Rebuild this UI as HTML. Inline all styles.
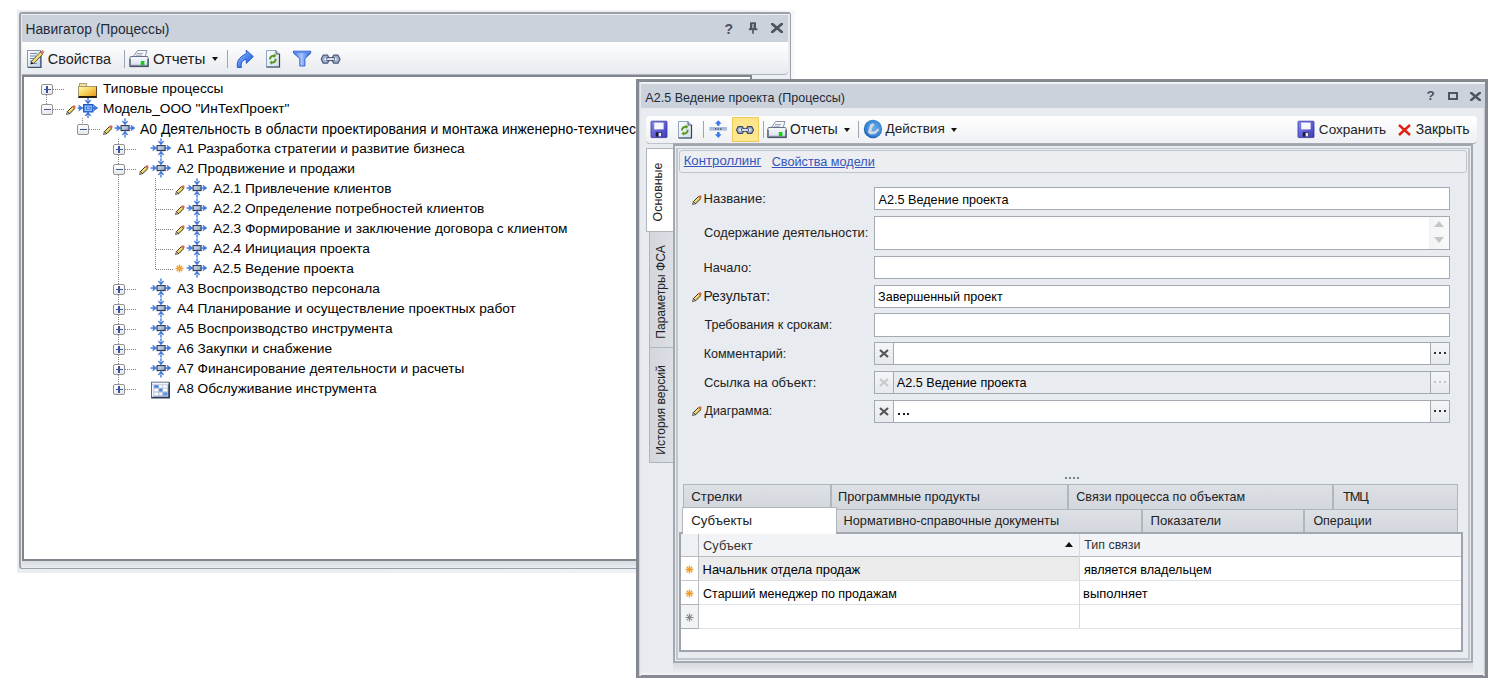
<!DOCTYPE html>
<html><head><meta charset="utf-8">
<style>
*{margin:0;padding:0;box-sizing:border-box}
html,body{width:1509px;height:696px;overflow:hidden;background:#fff;font-family:"Liberation Sans",sans-serif;color:#000}
.a{position:absolute}
.t{position:absolute;white-space:nowrap;font-size:13.6px;line-height:16px}
svg{position:absolute;overflow:visible}
</style></head><body>

<svg width="0" height="0" style="position:absolute">
<defs>
<linearGradient id="gbox" x1="0" y1="0" x2="0" y2="1"><stop offset="0" stop-color="#d8e0ec"/><stop offset="1" stop-color="#7d8ea8"/></linearGradient>
<linearGradient id="gpm" x1="0" y1="0" x2="0" y2="1"><stop offset="0" stop-color="#ffffff"/><stop offset="1" stop-color="#e2e2e2"/></linearGradient>
<linearGradient id="gfold" x1="0" y1="0" x2="1" y2="1"><stop offset="0" stop-color="#fff2b0"/><stop offset="1" stop-color="#e8a830"/></linearGradient>
<symbol id="proc" viewBox="0 0 22 20">
 <defs><linearGradient id="gbox2" x1="0" y1="0" x2="1" y2="1"><stop offset="0" stop-color="#dfe8f6"/><stop offset="0.6" stop-color="#a8b8d4"/><stop offset="1" stop-color="#7888a8"/></linearGradient></defs>
 <g fill="#3a7ae8" stroke="#1f4fb8" stroke-width="0.35">
 <rect x="0.6" y="9.3" width="3" height="1.5" stroke="none"/>
 <path d="M2.6 7 L6.9 10 L2.6 13 L3.8 10Z"/>
 <rect x="15.5" y="9.3" width="2.5" height="1.5" stroke="none"/>
 <path d="M16.8 7 L21 10 L16.8 13 L18 10Z"/>
 <rect x="10.3" y="0.4" width="1.4" height="3" stroke="none"/>
 <path d="M8 3 L11 7 L14 3 L11 4.2Z"/>
 <rect x="10.3" y="16.6" width="1.4" height="3" stroke="none"/>
 <path d="M8 17 L11 13 L14 17 L11 15.8Z"/>
 </g>
 <rect x="7.1" y="7.6" width="8" height="5" fill="url(#gbox2)" stroke="#2a3a58" stroke-width="1.1"/>
</symbol>
<symbol id="model" viewBox="0 0 22 20">
 <g fill="#3a7ae8" stroke="#1f4fb8" stroke-width="0.35">
 <rect x="0.6" y="9.3" width="3" height="1.5" stroke="none"/>
 <path d="M1.6 7 L6.2 10 L1.6 13 L2.8 10Z"/>
 <rect x="16" y="9.3" width="2.5" height="1.5" stroke="none"/>
 <path d="M16.6 7 L21 10 L16.6 13 L17.8 10Z"/>
 <rect x="10.3" y="0" width="1.4" height="2.5" stroke="none"/>
 <path d="M7.8 2 L11 6 L14.2 2 L11 3.2Z"/>
 <rect x="10.3" y="17.5" width="1.4" height="2.5" stroke="none"/>
 <path d="M7.8 18 L11 14 L14.2 18 L11 16.8Z"/>
 </g>
 <rect x="6.5" y="6.5" width="9.5" height="7.5" fill="#3d7ae0" stroke="#2058c0" stroke-width="1"/>
 <rect x="8.3" y="8.2" width="6" height="4.2" fill="none" stroke="#9cc0f4" stroke-width="1.1"/>
 <rect x="10" y="9.6" width="2.6" height="1.6" fill="#a8c8f8"/>
</symbol>
<symbol id="pencil" viewBox="0 0 10 10">
 <path d="M1.4 6.6 L6.4 1.6 L8.6 3.8 L3.6 8.8 Z" fill="#e8cc50" stroke="#2a2418" stroke-width="0.9"/>
 <path d="M2.6 6.8 L6.8 2.6" stroke="#fff0a0" stroke-width="0.9"/>
 <path d="M6.4 1.6 L7.4 0.6 Q8.4 0 9.2 0.8 Q10 1.6 9.4 2.6 L8.6 3.8Z" fill="#d8684a"/>
 <path d="M1.4 6.6 L3.6 8.8 L0.4 9.6Z" fill="#c8c8c8" stroke="#2a2418" stroke-width="0.6"/>
</symbol>
<symbol id="star" viewBox="0 0 9 9">
 <path d="M4.5 0.5V8.5M0.5 4.5H8.5M1.7 1.7L7.3 7.3M7.3 1.7L1.7 7.3" stroke="#f0a030" stroke-width="1.3"/>
</symbol>
<symbol id="star_g" viewBox="0 0 9 9">
 <path d="M4.5 0.5V8.5M0.5 4.5H8.5M1.7 1.7L7.3 7.3M7.3 1.7L1.7 7.3" stroke="#8a8a8a" stroke-width="1.1"/>
</symbol>
<symbol id="save" viewBox="0 0 16 16">
 <rect x="0.5" y="0.5" width="15" height="15" rx="1" fill="#4a4fc8" stroke="#30348a"/>
 <rect x="3" y="1" width="10" height="7" fill="#f0f2fa"/>
 <rect x="4" y="10" width="7" height="5" fill="#20204a"/>
 <rect x="5" y="11" width="2" height="3" fill="#e0e0e0"/>
</symbol>
<symbol id="docref" viewBox="0 0 16 16">
 <path d="M2.5 0.5H10.5L14.5 4.5V15.5H2.5Z" fill="#fafbfd" stroke="#506070"/>
 <path d="M5 7.5A3 3 0 0 1 11 6.5M11 8.5A3 3 0 0 1 5 9.5" stroke="#4a9a30" stroke-width="1.6" fill="none"/>
</symbol>
<symbol id="expand" viewBox="0 0 18 17">
 <rect x="0" y="7.5" width="18" height="2.5" fill="#9ab4d4"/>
 <path d="M9 0L5 5H13Z M9 17L5 12H13Z" fill="#3a7ae0"/>
 <rect x="8" y="4" width="2" height="3" fill="#3a7ae0"/><rect x="8" y="10" width="2" height="3" fill="#3a7ae0"/>
</symbol>
<symbol id="chain" viewBox="0 0 18 10">
 <rect x="1" y="1.5" width="9" height="7" rx="3.5" fill="none" stroke="#4a5a70" stroke-width="2"/>
 <rect x="8" y="1.5" width="9" height="7" rx="3.5" fill="none" stroke="#4a5a70" stroke-width="2"/>
 <rect x="2.5" y="3.5" width="13" height="3" rx="1.5" fill="#c0c8d8"/>
</symbol>
<symbol id="printer" viewBox="0 0 18 17">
 <path d="M5 0.5H15L14 6H4Z" fill="#f2f4f8" stroke="#6a7486"/>
 <path d="M1.5 6H16.5L17.5 10V15.5H0.5V10Z" fill="#d4d9e2" stroke="#4e586a"/>
 <rect x="2" y="10" width="14" height="2" fill="#9aa4b4"/>
 <rect x="12" y="11.5" width="3" height="2.5" fill="#28c028"/>
</symbol>
<symbol id="globe" viewBox="0 0 18 18">
 <circle cx="9" cy="9" r="8.5" fill="#2a6ab8"/>
 <circle cx="8" cy="7.5" r="6" fill="#5a9ae0"/>
 <path d="M4 9C5 12 8 13 10 11L14 5L12 4L9 9L6 7Z" fill="#e8f0fa"/>
</symbol>
<symbol id="redx" viewBox="0 0 13 12">
 <path d="M1 1L12 11M12 1L1 11" stroke="#e02010" stroke-width="2.4"/>
</symbol>
<symbol id="props" viewBox="0 0 17 17">
 <rect x="0.5" y="2.5" width="12" height="14" fill="#eef2f8" stroke="#5a6a80"/>
 <path d="M2.5 6H9M2.5 8.5H9M2.5 11H7M2.5 13.5H10" stroke="#8a9ab0" stroke-width="0.8"/>
 <path d="M4 12L13 3L15 5L6 14L3.5 14.5Z" fill="#f2d050" stroke="#6a5a20" stroke-width="0.7"/>
 <path d="M13 3L14.5 1.5L16.5 3.5L15 5Z" fill="#e06a50"/>
</symbol>
<symbol id="redo" viewBox="0 0 17 18">
 <path d="M2 17C0 12 2 7 8 6V2L16 8L8 14V10C5 10 3 12 2 17Z" fill="#3a78e0" stroke="#2050b0" stroke-width="0.8"/>
</symbol>
<symbol id="filter" viewBox="0 0 18 16">
 <path d="M0.5 0.5H17.5L11 7V15.5L7 13V7Z" fill="#3a82e8" stroke="#2a60c0" stroke-width="0.8"/>
 <path d="M2 1.5H16L12 5H6Z" fill="#8ab8f4"/>
</symbol>
<symbol id="pin" viewBox="0 0 10 12">
 <rect x="2" y="0.3" width="6" height="7" fill="#50555c"/>
 <rect x="4.4" y="2" width="1.2" height="4.6" fill="#cdd3db"/>
 <rect x="0.8" y="6.4" width="8.6" height="1.8" fill="#50555c"/>
 <rect x="4.2" y="8" width="1.6" height="3.8" fill="#50555c"/>
</symbol>
<symbol id="xbold" viewBox="0 0 12 10">
 <path d="M1.2 1L10.8 9M10.8 1L1.2 9" stroke="#50555c" stroke-width="2.8" stroke-linecap="square"/>
</symbol>
</defs></svg>
<div class="a" style="left:17px;top:10px;width:778px;height:563px;background:linear-gradient(90deg,#e9edf2,#eef1f5 95%,#f6f8fa)"></div>
<div class="a" style="left:19px;top:12px;width:772px;height:557px;border:2px solid #9ba0a7;border-right-width:1px;border-bottom-width:1px;border-radius:3px;background:#e8ebf0"></div>
<div class="a" style="left:21px;top:14px;width:769px;height:1px;background:#eceff3"></div>
<div class="a" style="left:22px;top:15px;width:766px;height:27px;background:#cbd2db"></div>
<div class="a" style="left:788px;top:15px;width:2px;height:27px;background:#e4e7ec"></div>
<div class="t" style="left:25.42445px;top:21.21px;font-size:13.83px;color:#1e2a3a;">Навигатор (Процессы)</div>
<div class="a" style="left:22px;top:42px;width:766px;height:33px;background:linear-gradient(#ffffff,#e7eaef);border-bottom:1px solid #b0b4ba;border-radius:0 0 4px 0"></div>
<svg style="left:25px;top:47px" width="22" height="22" viewBox="0 0 22 22">
<defs><linearGradient id="ipg" x1="0" y1="0" x2="1" y2="1"><stop offset="0" stop-color="#ffffff"/><stop offset="1" stop-color="#c4d0e2"/></linearGradient></defs>
<rect x="2.5" y="3.5" width="13" height="16.5" fill="url(#ipg)" stroke="#8498b8"/>
<path d="M3 20.5H16V4" stroke="#3c5070" stroke-width="1.2" fill="none"/>
<path d="M5 6.5H12M5 9H11M5 11.5H9M5 14H9M5 16.5H12" stroke="#7890b0" stroke-width="1"/>
<path d="M6.2 14.6L15.2 5.2L17.6 7.4L8.4 16.6Z" fill="#f0dc78" stroke="#2a2a20" stroke-width="0.7"/>
<path d="M15.2 5.2L16.6 3.6Q17.6 2.8 18.6 3.8Q19.4 4.8 18.8 5.8L17.6 7.4Z" fill="#e07a5a"/>
<path d="M6.2 14.6L8.4 16.6L5.6 17.4Z" fill="#222"/>
</svg>
<div class="t" style="left:47.82348px;top:50.82px;font-size:14.38px;color:#222;">Свойства</div>
<div class="a" style="left:124px;top:50px;width:1px;height:18px;background:#9aa6b4"></div>
<svg style="left:128px;top:47px" width="22" height="22" viewBox="0 0 22 22">
<defs><linearGradient id="iprb" x1="0" y1="0" x2="0" y2="1"><stop offset="0" stop-color="#f6f8fc"/><stop offset="0.7" stop-color="#dfe6f2"/><stop offset="1" stop-color="#9aa6ba"/></linearGradient></defs>
<path d="M9.5 3.5H19L17.2 9.5H5.5Z" fill="#f4f6fa" stroke="#7a88a0" stroke-width="0.9"/>
<path d="M9 6.5H15M8 8.2H14" stroke="#8a96aa" stroke-width="0.8"/>
<path d="M2.5 9.5H19.5L20.5 12V19.5H1.5V12Z" fill="url(#iprb)" stroke="#5a6680" stroke-width="0.9"/>
<rect x="2" y="18.5" width="18.5" height="1.6" fill="#4a5468"/>
<rect x="1.6" y="12" width="1.4" height="7" fill="#7a8498"/><rect x="19.2" y="12" width="1.4" height="7" fill="#5a6478"/>
<rect x="12.8" y="14" width="3.6" height="4" fill="#10d010"/>
</svg>
<div class="t" style="left:152.90126px;top:50.54px;font-size:15.19px;color:#222;">Отчеты</div>
<div class="a" style="left:212px;top:57px;width:0;height:0;border-left:3.5px solid transparent;border-right:3.5px solid transparent;border-top:4px solid #111"></div>
<div class="a" style="left:227px;top:50px;width:1px;height:18px;background:#9aa6b4"></div>
<svg style="left:234px;top:47px" width="22" height="22" viewBox="0 0 22 22">
<defs><linearGradient id="irg" x1="0" y1="0" x2="1" y2="1"><stop offset="0" stop-color="#b8d4fa"/><stop offset="0.5" stop-color="#4a86ee"/><stop offset="1" stop-color="#1a4ed0"/></linearGradient></defs>
<path d="M3.4 20.6C2.8 16 3.2 11 12.3 6.6V3.2L19.3 9.6L12.3 16.4V12.4C8.4 13 6.6 15.6 7.4 20.4Z" fill="url(#irg)" stroke="#1f4fc8" stroke-width="0.9" stroke-linejoin="round"/>
</svg>
<svg style="left:262px;top:47px" width="22" height="22" viewBox="0 0 22 22">
<defs><linearGradient id="idg" x1="0" y1="0" x2="1" y2="1"><stop offset="0" stop-color="#ffffff"/><stop offset="1" stop-color="#d0dcec"/></linearGradient></defs>
<path d="M4.5 3.5H14L17.5 7V20H4.5Z" fill="url(#idg)" stroke="#90a4c4" stroke-width="1"/>
<path d="M17.5 7V20H4.5" stroke="#34465e" stroke-width="1.2" fill="none"/>
<path d="M14 3.5V7H17.5" fill="#b8c4d8" stroke="#34465e" stroke-width="0.8"/>
<path d="M8 12.5Q8 8.6 12.6 8.8" stroke="#5a9a20" stroke-width="2" fill="none"/>
<path d="M11.8 6.6L14.4 8.8L11.8 11Z" fill="#5a9a20"/>
<path d="M13.6 11.8Q13.8 15.6 9.2 15.6" stroke="#5a9a20" stroke-width="2" fill="none"/>
<path d="M10 13.4L7.4 15.6L10 17.8Z" fill="#5a9a20"/>
</svg>
<svg style="left:290px;top:47px" width="22" height="22" viewBox="0 0 22 22">
<defs><linearGradient id="ifg" x1="0" y1="0" x2="1" y2="0"><stop offset="0" stop-color="#3a70e8"/><stop offset="0.45" stop-color="#a8c8fa"/><stop offset="1" stop-color="#2a5ed8"/></linearGradient></defs>
<path d="M3.4 4.2H20.8L20.6 6.2L14.9 11.7V19H9.8V11.7L3.6 6.2Z" fill="url(#ifg)" stroke="#2a58d0" stroke-width="0.9" stroke-linejoin="round"/>
<path d="M4 4.6H20.2V6H4Z" fill="#5a8cf0"/>
</svg>
<svg style="left:318px;top:47px" width="26" height="22" viewBox="0 0 26 22">
<path d="M3.2 12.2L5.2 8.2H9.6L11.4 12.2L9.6 16.2H5.2Z" fill="#9fb0cc" stroke="#4a5a80" stroke-width="1.2" stroke-linejoin="round"/>
<path d="M13.8 12.2L15.6 8.2H20L22 12.2L20 16.2H15.6Z" fill="#9fb0cc" stroke="#4a5a80" stroke-width="1.2" stroke-linejoin="round"/>
<rect x="8.6" y="10.6" width="8" height="3" rx="1.2" fill="#dfe6f2" stroke="#1e2e50" stroke-width="0.8"/>
<circle cx="7.4" cy="12.3" r="1" fill="#fff"/><circle cx="17.6" cy="12.3" r="1" fill="#fff"/>
</svg>
<div class="t" style="left:724.5px;top:21.15px;font-size:14px;color:#4a5262;font-weight:bold">?</div>
<svg style="left:748px;top:22px" width="10" height="12"><use href="#pin" width="10" height="12"/></svg>
<svg style="left:771px;top:23px" width="12" height="10"><use href="#xbold" width="12" height="10"/></svg>
<div class="a" style="left:22px;top:561px;width:768px;height:7px;background:linear-gradient(#d8dbe0,#e8ebf0)"></div>
<div class="a" style="left:22px;top:75px;width:730px;height:486px;background:#fff;border:2px solid #80868e"></div>
<div class="a" style="left:752px;top:75px;width:38px;height:4px;background:#eceff3"></div>
<div class="a" style="left:46px;top:95px;width:1px;height:9px;background:repeating-linear-gradient(180deg,#808080 0 1px,transparent 1px 2px)"></div>
<div class="a" style="left:82px;top:118px;width:1px;height:6px;background:repeating-linear-gradient(180deg,#808080 0 1px,transparent 1px 2px)"></div>
<div class="a" style="left:118px;top:139px;width:1px;height:245px;background:repeating-linear-gradient(180deg,#808080 0 1px,transparent 1px 2px)"></div>
<div class="a" style="left:155px;top:178px;width:1px;height:92px;background:repeating-linear-gradient(180deg,#808080 0 1px,transparent 1px 2px)"></div>
<div class="a" style="left:41px;top:84px;width:11.5px;height:11px;border:1.3px solid #929292;border-radius:2px;background:linear-gradient(#fff,#e8e8e8)"></div><div class="a" style="left:44px;top:89px;width:6.5px;height:1.3px;background:#3a52a0"></div><div class="a" style="left:46px;top:86.3px;width:1.5px;height:6.8px;background:#3a52a0"></div>
<div class="a" style="left:53px;top:89px;width:12px;height:1px;background:repeating-linear-gradient(90deg,#808080 0 1px,transparent 1px 2px)"></div>
<div class="a" style="left:79px;top:82.5px;width:8px;height:3.5px;background:linear-gradient(#e8dca8,#f8ec98);border:1px solid #b0a070;border-bottom:none;border-radius:1px 1px 0 0"></div>
<div class="a" style="left:78px;top:85.5px;width:19px;height:12px;background:linear-gradient(150deg,#fff6a8,#f6cc50 55%,#e89820);border:1px solid #a89870;border-right-color:#5a4a28;border-bottom:2px solid #2a2010"></div>
<div class="t" style="left:103px;top:81.45px;font-size:13.7px;color:#000;">Типовые процессы</div>
<div class="a" style="left:41px;top:104px;width:11.5px;height:11px;border:1.3px solid #929292;border-radius:2px;background:linear-gradient(#fff,#e8e8e8)"></div><div class="a" style="left:44px;top:109px;width:6.5px;height:1.3px;background:#3a52a0"></div>
<div class="a" style="left:53px;top:109px;width:12px;height:1px;background:repeating-linear-gradient(90deg,#808080 0 1px,transparent 1px 2px)"></div>
<svg style="left:65.5px;top:104.5px" width="10" height="10"><use href="#pencil" width="10" height="10"/></svg>
<svg style="left:77.4px;top:98px" width="22" height="20"><use href="#model" width="22" height="20"/></svg>
<div class="t" style="left:103px;top:101.45px;font-size:13.7px;color:#000;">Модель_ООО "ИнТехПроект"</div>
<div class="a" style="left:77px;top:124px;width:11.5px;height:11px;border:1.3px solid #929292;border-radius:2px;background:linear-gradient(#fff,#e8e8e8)"></div><div class="a" style="left:80px;top:129px;width:6.5px;height:1.3px;background:#3a52a0"></div>
<div class="a" style="left:89px;top:129px;width:12px;height:1px;background:repeating-linear-gradient(90deg,#808080 0 1px,transparent 1px 2px)"></div>
<svg style="left:102.5px;top:124.5px" width="10" height="10"><use href="#pencil" width="10" height="10"/></svg>
<svg style="left:114.4px;top:118px" width="22" height="20"><use href="#proc" width="22" height="20"/></svg>
<div class="t" style="left:140px;top:121.37px;font-size:13.95px;color:#000;">A0 Деятельность в области проектирования и монтажа инженерно-технических систем</div>
<div class="a" style="left:113px;top:144px;width:11.5px;height:11px;border:1.3px solid #929292;border-radius:2px;background:linear-gradient(#fff,#e8e8e8)"></div><div class="a" style="left:116px;top:149px;width:6.5px;height:1.3px;background:#3a52a0"></div><div class="a" style="left:118px;top:146.3px;width:1.5px;height:6.8px;background:#3a52a0"></div>
<div class="a" style="left:125px;top:149px;width:12px;height:1px;background:repeating-linear-gradient(90deg,#808080 0 1px,transparent 1px 2px)"></div>
<svg style="left:150.4px;top:138px" width="22" height="20"><use href="#proc" width="22" height="20"/></svg>
<div class="t" style="left:177px;top:141.45px;font-size:13.7px;color:#000;">A1 Разработка стратегии и развитие бизнеса</div>
<div class="a" style="left:113px;top:164px;width:11.5px;height:11px;border:1.3px solid #929292;border-radius:2px;background:linear-gradient(#fff,#e8e8e8)"></div><div class="a" style="left:116px;top:169px;width:6.5px;height:1.3px;background:#3a52a0"></div>
<div class="a" style="left:125px;top:169px;width:12px;height:1px;background:repeating-linear-gradient(90deg,#808080 0 1px,transparent 1px 2px)"></div>
<svg style="left:138.5px;top:164.5px" width="10" height="10"><use href="#pencil" width="10" height="10"/></svg>
<svg style="left:150.4px;top:158px" width="22" height="20"><use href="#proc" width="22" height="20"/></svg>
<div class="t" style="left:177px;top:161.45px;font-size:13.7px;color:#000;">A2 Продвижение и продажи</div>
<div class="a" style="left:156px;top:189px;width:18px;height:1px;background:repeating-linear-gradient(90deg,#808080 0 1px,transparent 1px 2px)"></div>
<svg style="left:174.5px;top:184.5px" width="10" height="10"><use href="#pencil" width="10" height="10"/></svg>
<svg style="left:186.4px;top:178px" width="22" height="20"><use href="#proc" width="22" height="20"/></svg>
<div class="t" style="left:213px;top:181.45px;font-size:13.7px;color:#000;">A2.1 Привлечение клиентов</div>
<div class="a" style="left:156px;top:209px;width:18px;height:1px;background:repeating-linear-gradient(90deg,#808080 0 1px,transparent 1px 2px)"></div>
<svg style="left:174.5px;top:204.5px" width="10" height="10"><use href="#pencil" width="10" height="10"/></svg>
<svg style="left:186.4px;top:198px" width="22" height="20"><use href="#proc" width="22" height="20"/></svg>
<div class="t" style="left:213px;top:201.45px;font-size:13.7px;color:#000;">A2.2 Определение потребностей клиентов</div>
<div class="a" style="left:156px;top:229px;width:18px;height:1px;background:repeating-linear-gradient(90deg,#808080 0 1px,transparent 1px 2px)"></div>
<svg style="left:174.5px;top:224.5px" width="10" height="10"><use href="#pencil" width="10" height="10"/></svg>
<svg style="left:186.4px;top:218px" width="22" height="20"><use href="#proc" width="22" height="20"/></svg>
<div class="t" style="left:213px;top:221.45px;font-size:13.7px;color:#000;">A2.3 Формирование и заключение договора с клиентом</div>
<div class="a" style="left:156px;top:249px;width:18px;height:1px;background:repeating-linear-gradient(90deg,#808080 0 1px,transparent 1px 2px)"></div>
<svg style="left:174.5px;top:244.5px" width="10" height="10"><use href="#pencil" width="10" height="10"/></svg>
<svg style="left:186.4px;top:238px" width="22" height="20"><use href="#proc" width="22" height="20"/></svg>
<div class="t" style="left:213px;top:241.45px;font-size:13.7px;color:#000;">A2.4 Инициация проекта</div>
<div class="a" style="left:156px;top:269px;width:18px;height:1px;background:repeating-linear-gradient(90deg,#808080 0 1px,transparent 1px 2px)"></div>
<svg style="left:175px;top:263.5px" width="9" height="9"><use href="#star" width="9" height="9"/></svg>
<svg style="left:186.4px;top:258px" width="22" height="20"><use href="#proc" width="22" height="20"/></svg>
<div class="t" style="left:213px;top:261.45px;font-size:13.7px;color:#000;">A2.5 Ведение проекта</div>
<div class="a" style="left:113px;top:284px;width:11.5px;height:11px;border:1.3px solid #929292;border-radius:2px;background:linear-gradient(#fff,#e8e8e8)"></div><div class="a" style="left:116px;top:289px;width:6.5px;height:1.3px;background:#3a52a0"></div><div class="a" style="left:118px;top:286.3px;width:1.5px;height:6.8px;background:#3a52a0"></div>
<div class="a" style="left:125px;top:289px;width:12px;height:1px;background:repeating-linear-gradient(90deg,#808080 0 1px,transparent 1px 2px)"></div>
<svg style="left:150.4px;top:278px" width="22" height="20"><use href="#proc" width="22" height="20"/></svg>
<div class="t" style="left:177px;top:281.45px;font-size:13.7px;color:#000;">A3 Воспроизводство персонала</div>
<div class="a" style="left:113px;top:304px;width:11.5px;height:11px;border:1.3px solid #929292;border-radius:2px;background:linear-gradient(#fff,#e8e8e8)"></div><div class="a" style="left:116px;top:309px;width:6.5px;height:1.3px;background:#3a52a0"></div><div class="a" style="left:118px;top:306.3px;width:1.5px;height:6.8px;background:#3a52a0"></div>
<div class="a" style="left:125px;top:309px;width:12px;height:1px;background:repeating-linear-gradient(90deg,#808080 0 1px,transparent 1px 2px)"></div>
<svg style="left:150.4px;top:298px" width="22" height="20"><use href="#proc" width="22" height="20"/></svg>
<div class="t" style="left:177px;top:301.45px;font-size:13.7px;color:#000;">A4 Планирование и осуществление проектных работ</div>
<div class="a" style="left:113px;top:324px;width:11.5px;height:11px;border:1.3px solid #929292;border-radius:2px;background:linear-gradient(#fff,#e8e8e8)"></div><div class="a" style="left:116px;top:329px;width:6.5px;height:1.3px;background:#3a52a0"></div><div class="a" style="left:118px;top:326.3px;width:1.5px;height:6.8px;background:#3a52a0"></div>
<div class="a" style="left:125px;top:329px;width:12px;height:1px;background:repeating-linear-gradient(90deg,#808080 0 1px,transparent 1px 2px)"></div>
<svg style="left:150.4px;top:318px" width="22" height="20"><use href="#proc" width="22" height="20"/></svg>
<div class="t" style="left:177px;top:321.45px;font-size:13.7px;color:#000;">A5 Воспроизводство инструмента</div>
<div class="a" style="left:113px;top:344px;width:11.5px;height:11px;border:1.3px solid #929292;border-radius:2px;background:linear-gradient(#fff,#e8e8e8)"></div><div class="a" style="left:116px;top:349px;width:6.5px;height:1.3px;background:#3a52a0"></div><div class="a" style="left:118px;top:346.3px;width:1.5px;height:6.8px;background:#3a52a0"></div>
<div class="a" style="left:125px;top:349px;width:12px;height:1px;background:repeating-linear-gradient(90deg,#808080 0 1px,transparent 1px 2px)"></div>
<svg style="left:150.4px;top:338px" width="22" height="20"><use href="#proc" width="22" height="20"/></svg>
<div class="t" style="left:177px;top:341.45px;font-size:13.7px;color:#000;">A6 Закупки и снабжение</div>
<div class="a" style="left:113px;top:364px;width:11.5px;height:11px;border:1.3px solid #929292;border-radius:2px;background:linear-gradient(#fff,#e8e8e8)"></div><div class="a" style="left:116px;top:369px;width:6.5px;height:1.3px;background:#3a52a0"></div><div class="a" style="left:118px;top:366.3px;width:1.5px;height:6.8px;background:#3a52a0"></div>
<div class="a" style="left:125px;top:369px;width:12px;height:1px;background:repeating-linear-gradient(90deg,#808080 0 1px,transparent 1px 2px)"></div>
<svg style="left:150.4px;top:358px" width="22" height="20"><use href="#proc" width="22" height="20"/></svg>
<div class="t" style="left:177px;top:361.45px;font-size:13.7px;color:#000;">A7 Финансирование деятельности и расчеты</div>
<div class="a" style="left:113px;top:384px;width:11.5px;height:11px;border:1.3px solid #929292;border-radius:2px;background:linear-gradient(#fff,#e8e8e8)"></div><div class="a" style="left:116px;top:389px;width:6.5px;height:1.3px;background:#3a52a0"></div><div class="a" style="left:118px;top:386.3px;width:1.5px;height:6.8px;background:#3a52a0"></div>
<div class="a" style="left:125px;top:389px;width:12px;height:1px;background:repeating-linear-gradient(90deg,#808080 0 1px,transparent 1px 2px)"></div>
<svg style="left:148px;top:379px" width="24" height="21" viewBox="0 0 24 21">
<rect x="3.5" y="3.2" width="17.6" height="15" fill="#b4c0d4" stroke="#5a6a88" stroke-width="1"/>
<path d="M21.2 3.5V18.8H3.2" stroke="#2e3e58" stroke-width="1.6" fill="none"/>
<rect x="4" y="3.8" width="16.6" height="1.6" fill="#f4f6fa"/>
<rect x="4" y="6" width="1.4" height="11.6" fill="#f4f6fa"/>
<rect x="6.3" y="6.2" width="4" height="2.6" fill="#4a86ec"/><rect x="11.2" y="6.2" width="3" height="2.6" fill="#fbfcfe"/><rect x="15.1" y="6.2" width="4.2" height="2.6" fill="#fbfcfe"/>
<rect x="6.3" y="9.7" width="4" height="2.7" fill="#fbfcfe"/><rect x="11.2" y="9.7" width="3" height="2.7" fill="#4a86ec"/><rect x="15.1" y="9.7" width="4.2" height="2.7" fill="#fbfcfe"/>
<rect x="6.3" y="13.6" width="4" height="2.7" fill="#fbfcfe"/><rect x="11.2" y="13.6" width="3" height="2.7" fill="#eef2fa"/><rect x="15.1" y="13.6" width="4.2" height="2.7" fill="#5a92f0"/>
</svg>
<div class="t" style="left:177px;top:381.45px;font-size:13.7px;color:#000;">A8 Обслуживание инструмента</div>
<div class="a" style="left:636px;top:79px;width:852px;height:599px;border:3px solid #858a92;background:#e8ebf0"></div>
<div class="a" style="left:639px;top:82px;width:846px;height:2px;background:#f0f3f6"></div>
<div class="a" style="left:639px;top:82px;width:2px;height:594px;background:linear-gradient(90deg,#c4c8ce,#f0f3f6)"></div>
<div class="a" style="left:1483px;top:84px;width:2px;height:592px;background:linear-gradient(90deg,#f0f3f6,#b8bcc2)"></div>
<div class="a" style="left:641px;top:84px;width:844px;height:24px;background:#cbd2db"></div>
<div class="t" style="left:645.3px;top:90.04px;font-size:12.57px;color:#1e2a3a;">A2.5 Ведение проекта (Процессы)</div>
<div class="t" style="left:1426.5px;top:88.32px;font-size:13.5px;color:#4a5262;font-weight:bold">?</div>
<div class="a" style="left:1448px;top:92px;width:10px;height:8px;border:2px solid #50555c"></div>
<svg style="left:1469.5px;top:91.5px" width="11" height="9"><use href="#xbold" width="11" height="9"/></svg>
<div class="a" style="left:646px;top:116px;width:831px;height:28px;background:linear-gradient(#ffffff,#eef0f3);border-radius:4px;border-bottom:1px solid #a9adb3"></div>
<div class="a" style="left:732px;top:117px;width:27px;height:25px;background:linear-gradient(#fde488,#fde992);border:1px solid #efc95a"></div>
<svg style="left:646px;top:118px" width="22" height="22" viewBox="0 0 22 22">
<defs><linearGradient id="isg" x1="0" y1="0" x2="1" y2="1"><stop offset="0" stop-color="#8a8af0"/><stop offset="1" stop-color="#3a3ab8"/></linearGradient></defs>
<rect x="5" y="3.2" width="16" height="16.4" rx="0.8" fill="url(#isg)" stroke="#3434a0" stroke-width="0.8"/>
<rect x="8.2" y="4.6" width="9.4" height="6.8" fill="#f8f8fc"/>
<rect x="9.8" y="14.2" width="6" height="4.4" fill="#1a1a40"/>
<rect x="12.6" y="14.8" width="2.6" height="3.6" fill="#e8e8f0"/>
</svg>
<svg style="left:674px;top:118px" width="22" height="22" viewBox="0 0 22 22">
<defs><linearGradient id="idg" x1="0" y1="0" x2="1" y2="1"><stop offset="0" stop-color="#ffffff"/><stop offset="1" stop-color="#d0dcec"/></linearGradient></defs>
<path d="M4.5 3.5H14L17.5 7V20H4.5Z" fill="url(#idg)" stroke="#90a4c4" stroke-width="1"/>
<path d="M17.5 7V20H4.5" stroke="#34465e" stroke-width="1.2" fill="none"/>
<path d="M14 3.5V7H17.5" fill="#b8c4d8" stroke="#34465e" stroke-width="0.8"/>
<path d="M8 12.5Q8 8.6 12.6 8.8" stroke="#5a9a20" stroke-width="2" fill="none"/>
<path d="M11.8 6.6L14.4 8.8L11.8 11Z" fill="#5a9a20"/>
<path d="M13.6 11.8Q13.8 15.6 9.2 15.6" stroke="#5a9a20" stroke-width="2" fill="none"/>
<path d="M10 13.4L7.4 15.6L10 17.8Z" fill="#5a9a20"/>
</svg>
<div class="a" style="left:703px;top:121px;width:1px;height:17px;background:#9aa6b4"></div>
<svg style="left:706px;top:118px" width="22" height="22" viewBox="0 0 22 22">
<path d="M12.3 2.2L8.9 5.8H11V7.8H13.6V5.8H15.6Z" fill="#3a78f0"/>
<path d="M12.3 20L8.9 16.2H11V13.9H13.6V16.2H15.6Z" fill="#3a78f0"/>
<rect x="3.5" y="9" width="17.4" height="3.6" fill="#a8bcd8"/>
<rect x="9" y="10.3" width="1.2" height="1.4" fill="#2a3a60"/><rect x="11.6" y="10.3" width="1.2" height="1.4" fill="#2a3a60"/><rect x="14.2" y="10.3" width="1.2" height="1.4" fill="#2a3a60"/>
</svg>
<svg style="left:732.5px;top:118px" width="22" height="22" viewBox="0 0 22 22">
<path d="M3.5 12L5.3 8.6H9.4L11 12L9.4 15.4H5.3Z" fill="#a8b6ce" stroke="#3c4a6a" stroke-width="1.2" stroke-linejoin="round"/>
<path d="M13 12L14.6 8.6H18.7L20.5 12L18.7 15.4H14.6Z" fill="#a8b6ce" stroke="#3c4a6a" stroke-width="1.2" stroke-linejoin="round"/>
<rect x="8.4" y="10.6" width="7.2" height="2.8" rx="1.2" fill="#e4eaf4" stroke="#1e2e50" stroke-width="0.8"/>
<circle cx="7.2" cy="12" r="0.9" fill="#fff"/><circle cx="16.8" cy="12" r="0.9" fill="#fff"/>
</svg>
<div class="a" style="left:763px;top:121px;width:1px;height:17px;background:#9aa6b4"></div>
<svg style="left:766px;top:118px" width="22" height="22" viewBox="0 0 22 22">
<defs><linearGradient id="iprb" x1="0" y1="0" x2="0" y2="1"><stop offset="0" stop-color="#f6f8fc"/><stop offset="0.7" stop-color="#dfe6f2"/><stop offset="1" stop-color="#9aa6ba"/></linearGradient></defs>
<path d="M9.5 3.5H19L17.2 9.5H5.5Z" fill="#f4f6fa" stroke="#7a88a0" stroke-width="0.9"/>
<path d="M9 6.5H15M8 8.2H14" stroke="#8a96aa" stroke-width="0.8"/>
<path d="M2.5 9.5H19.5L20.5 12V19.5H1.5V12Z" fill="url(#iprb)" stroke="#5a6680" stroke-width="0.9"/>
<rect x="2" y="18.5" width="18.5" height="1.6" fill="#4a5468"/>
<rect x="1.6" y="12" width="1.4" height="7" fill="#7a8498"/><rect x="19.2" y="12" width="1.4" height="7" fill="#5a6478"/>
<rect x="12.8" y="14" width="3.6" height="4" fill="#10d010"/>
</svg>
<div class="t" style="left:790.0661200000001px;top:122.23px;font-size:13.78px;color:#222;">Отчеты</div>
<div class="a" style="left:844px;top:128px;width:0;height:0;border-left:3.5px solid transparent;border-right:3.5px solid transparent;border-top:4px solid #111"></div>
<div class="a" style="left:858px;top:121px;width:1px;height:17px;background:#9aa6b4"></div>
<svg style="left:862px;top:118px" width="22" height="22" viewBox="0 0 22 22">
<defs><radialGradient id="igg" cx="0.55" cy="0.45" r="0.6"><stop offset="0" stop-color="#6ab0f0"/><stop offset="0.7" stop-color="#3a88d8"/><stop offset="1" stop-color="#1050a0"/></radialGradient></defs>
<circle cx="11" cy="11" r="9.2" fill="url(#igg)"/>
<path d="M11 5.4L8.4 6.4L6.8 11.6L6 14.4L8.6 16.2L13.4 15.8L17 12.2L16.2 10.4L12.4 13.4L9.4 13.2L10 10L12.4 6.4Z" fill="#d6dce6" stroke="#b8c4d4" stroke-width="0.5"/>
</svg>
<div class="t" style="left:885.49176px;top:121.31px;font-size:13.53px;color:#222;">Действия</div>
<div class="a" style="left:951px;top:128px;width:0;height:0;border-left:3.5px solid transparent;border-right:3.5px solid transparent;border-top:4px solid #111"></div>
<svg style="left:1293px;top:118px" width="22" height="22" viewBox="0 0 22 22">
<defs><linearGradient id="isg" x1="0" y1="0" x2="1" y2="1"><stop offset="0" stop-color="#8a8af0"/><stop offset="1" stop-color="#3a3ab8"/></linearGradient></defs>
<rect x="5" y="3.2" width="16" height="16.4" rx="0.8" fill="url(#isg)" stroke="#3434a0" stroke-width="0.8"/>
<rect x="8.2" y="4.6" width="9.4" height="6.8" fill="#f8f8fc"/>
<rect x="9.8" y="14.2" width="6" height="4.4" fill="#1a1a40"/>
<rect x="12.6" y="14.8" width="2.6" height="3.6" fill="#e8e8f0"/>
</svg>
<div class="t" style="left:1318.8682999999999px;top:121.90px;font-size:13.55px;color:#222;">Сохранить</div>
<svg style="left:1398px;top:124px" width="13" height="12"><use href="#redx" width="13" height="12"/></svg>
<div class="t" style="left:1415.76876px;top:121.16px;font-size:13.98px;color:#222;">Закрыть</div>
<div class="a" style="left:649px;top:231px;width:25px;height:117px;background:linear-gradient(90deg,#d3d7dd,#dcdfe4);border:1px solid #b0b5bc;border-right:none"></div>
<div class="a" style="left:649px;top:347px;width:25px;height:116px;background:linear-gradient(90deg,#d3d7dd,#dcdfe4);border:1px solid #b0b5bc;border-right:none"></div>
<div class="a" style="left:646px;top:148px;width:29px;height:84px;background:#fff;border:1px solid #b0b5bc;border-right:none"></div>
<div class="t" style="left:658px;top:192px;width:0;height:0;font-size:12.4px;color:#222"><div style="position:absolute;left:0;top:0;transform:translate(-50%,-50%) rotate(-90deg)">Основные</div></div>
<div class="t" style="left:661px;top:292px;width:0;height:0;font-size:12.1px;color:#222"><div style="position:absolute;left:0;top:0;transform:translate(-50%,-50%) rotate(-90deg)">Параметры ФСА</div></div>
<div class="t" style="left:661px;top:410px;width:0;height:0;font-size:12.1px;color:#222"><div style="position:absolute;left:0;top:0;transform:translate(-50%,-50%) rotate(-90deg)">История версий</div></div>
<div class="a" style="left:673px;top:144px;width:800px;height:519px;border:2px solid #a3a9b1;border-top-color:#9fa5ad;background:#e8ebf0"></div>
<div class="a" style="left:676px;top:148px;width:794px;height:512px;border:2px solid #c3c7cb;border-top-width:1px"></div>
<div class="a" style="left:673px;top:663px;width:800px;height:9px;background:linear-gradient(#d6d9de,#e8ebf0)"></div>
<div class="a" style="left:641px;top:673px;width:842px;height:2px;background:#f0f3f6"></div>
<div class="a" style="left:649px;top:143px;width:24px;height:1px;background:#c0c4ca"></div>
<div class="a" style="left:679px;top:150px;width:788px;height:23px;border:1px solid #c0c5cc;border-radius:3px;background:#eceef2"></div>
<div class="t" style="left:683.67715px;top:153.42px;font-size:13.21px;color:#3355bb;text-decoration:underline">Контроллинг</div>
<div class="t" style="left:771.71528px;top:153.61px;font-size:12.68px;color:#3355bb;text-decoration:underline">Свойства модели</div>
<div class="t" style="left:703.5839500000001px;top:191.35px;font-size:13.13px;color:#222;">Название:</div>
<svg style="left:692px;top:194.9px" width="10" height="10"><use href="#pencil" width="10" height="10"/></svg>
<div class="a" style="left:874px;top:187px;width:576px;height:23px;background:#fff;border:1px solid #a4aab2"></div>
<div class="t" style="left:878.6px;top:191.72px;font-size:12.64px;color:#000;">A2.5 Ведение проекта</div>
<div class="t" style="left:704.0050200000001px;top:225.14px;font-size:12.87px;color:#222;">Содержание деятельности:</div>
<div class="a" style="left:874px;top:216px;width:576px;height:34px;background:#fff;border:1px solid #a4aab2"></div>
<div class="a" style="left:1429px;top:217px;width:20px;height:32px;background:linear-gradient(90deg,#f2f3f5,#fafafb)"></div>
<div class="a" style="left:1434px;top:221px;width:0;height:0;border-left:5.5px solid transparent;border-right:5.5px solid transparent;border-bottom:6px solid #c4c6ca"></div>
<div class="a" style="left:1434px;top:237px;width:0;height:0;border-left:5.5px solid transparent;border-right:5.5px solid transparent;border-top:6px solid #c4c6ca"></div>
<div class="t" style="left:703.6154px;top:259.68px;font-size:12.76px;color:#222;">Начало:</div>
<div class="a" style="left:874px;top:256px;width:576px;height:23px;background:#fff;border:1px solid #a4aab2"></div>
<div class="t" style="left:703.527px;top:288.52px;font-size:13.8px;color:#222;">Результат:</div>
<svg style="left:692px;top:292.3px" width="10" height="10"><use href="#pencil" width="10" height="10"/></svg>
<div class="a" style="left:874px;top:285px;width:576px;height:23px;background:#fff;border:1px solid #a4aab2"></div>
<div class="t" style="left:878.1227200000001px;top:289.15px;font-size:12.56px;color:#000;">Завершенный проект</div>
<div class="t" style="left:704.40882px;top:317.11px;font-size:12.66px;color:#222;">Требования к срокам:</div>
<div class="a" style="left:874px;top:313px;width:576px;height:24px;background:#fff;border:1px solid #a4aab2"></div>
<div class="t" style="left:703.6307px;top:345.94px;font-size:12.58px;color:#222;">Комментарий:</div>
<div class="a" style="left:874px;top:342px;width:576px;height:23px;background:#fff;border:1px solid #a4aab2"></div>
<div class="a" style="left:874px;top:342px;width:20px;height:23px;background:linear-gradient(#f4f5f7,#e6e9ed);border:1px solid #a4aab2"></div>
<svg style="left:879px;top:349px" width="10" height="9"><path d="M1 1L9 8M9 1L1 8" stroke="#555" stroke-width="2.2"/></svg>
<div class="a" style="left:1430px;top:342px;width:20px;height:23px;background:linear-gradient(#f4f5f7,#e6e9ed);border:1px solid #a4aab2"></div>
<div class="a" style="left:1434px;top:352px;width:2px;height:2px;background:#333"></div>
<div class="a" style="left:1439px;top:352px;width:2px;height:2px;background:#333"></div>
<div class="a" style="left:1444px;top:352px;width:2px;height:2px;background:#333"></div>
<div class="t" style="left:704.00016px;top:375.01px;font-size:12.96px;color:#222;">Ссылка на объект:</div>
<div class="a" style="left:874px;top:371px;width:576px;height:23px;background:#e8ebf0;border:1px solid #a4aab2"></div>
<div class="a" style="left:874px;top:371px;width:20px;height:23px;background:linear-gradient(#f4f5f7,#e6e9ed);border:1px solid #a4aab2"></div>
<svg style="left:879px;top:378px" width="10" height="9"><path d="M1 1L9 8M9 1L1 8" stroke="#c8c8c8" stroke-width="2.2"/></svg>
<div class="a" style="left:1430px;top:371px;width:20px;height:23px;background:linear-gradient(#f4f5f7,#e6e9ed);border:1px solid #a4aab2"></div>
<div class="a" style="left:1434px;top:381px;width:2px;height:2px;background:#c4c4c4"></div>
<div class="a" style="left:1439px;top:381px;width:2px;height:2px;background:#c4c4c4"></div>
<div class="a" style="left:1444px;top:381px;width:2px;height:2px;background:#c4c4c4"></div>
<div class="t" style="left:896.8px;top:375.32px;font-size:12.64px;color:#000;">A2.5 Ведение проекта</div>
<div class="t" style="left:704.60104px;top:402.71px;font-size:12.37px;color:#222;">Диаграмма:</div>
<svg style="left:692px;top:406px" width="10" height="10"><use href="#pencil" width="10" height="10"/></svg>
<div class="a" style="left:874px;top:400px;width:576px;height:23px;background:#fff;border:1px solid #a4aab2"></div>
<div class="a" style="left:874px;top:400px;width:20px;height:23px;background:linear-gradient(#f4f5f7,#e6e9ed);border:1px solid #a4aab2"></div>
<svg style="left:879px;top:407px" width="10" height="9"><path d="M1 1L9 8M9 1L1 8" stroke="#555" stroke-width="2.2"/></svg>
<div class="a" style="left:1430px;top:400px;width:20px;height:23px;background:linear-gradient(#f4f5f7,#e6e9ed);border:1px solid #a4aab2"></div>
<div class="a" style="left:1434px;top:410px;width:2px;height:2px;background:#333"></div>
<div class="a" style="left:1439px;top:410px;width:2px;height:2px;background:#333"></div>
<div class="a" style="left:1444px;top:410px;width:2px;height:2px;background:#333"></div>
<div class="a" style="left:898px;top:413px;width:2px;height:2px;background:#1a1a2a"></div>
<div class="a" style="left:902.5px;top:413px;width:2px;height:2px;background:#1a1a2a"></div>
<div class="a" style="left:907px;top:413px;width:2px;height:2px;background:#1a1a2a"></div>
<div class="a" style="left:1065px;top:477px;width:2px;height:2px;background:#7a8290"></div>
<div class="a" style="left:1069px;top:477px;width:2px;height:2px;background:#7a8290"></div>
<div class="a" style="left:1073px;top:477px;width:2px;height:2px;background:#7a8290"></div>
<div class="a" style="left:1077px;top:477px;width:2px;height:2px;background:#7a8290"></div>
<div class="a" style="left:683px;top:484px;width:148px;height:26px;background:linear-gradient(#dde0e5,#d3d7dd);border:1px solid #b1b6bd"></div>
<div class="t" style="left:691.28504px;top:489.21px;font-size:13.24px;color:#222;">Стрелки</div>
<div class="a" style="left:831px;top:484px;width:237px;height:26px;background:linear-gradient(#dde0e5,#d3d7dd);border:1px solid #b1b6bd"></div>
<div class="t" style="left:838.01625px;top:489.38px;font-size:12.75px;color:#222;">Программные продукты</div>
<div class="a" style="left:1068px;top:484px;width:265px;height:26px;background:linear-gradient(#dde0e5,#d3d7dd);border:1px solid #b1b6bd"></div>
<div class="t" style="left:1076.32284px;top:489.45px;font-size:12.54px;color:#222;">Связи процесса по объектам</div>
<div class="a" style="left:1333px;top:484px;width:125px;height:26px;background:linear-gradient(#dde0e5,#d3d7dd);border:1px solid #b1b6bd"></div>
<div class="t" style="left:1343.1000000000001px;top:489.36px;font-size:12.8px;color:#222;letter-spacing:-1.1px">ТМЦ</div>
<div class="a" style="left:836px;top:509px;width:306px;height:25px;background:linear-gradient(#dde0e5,#d3d7dd);border:1px solid #b1b6bd"></div>
<div class="t" style="left:843.5171px;top:513.09px;font-size:12.74px;color:#222;">Нормативно-справочные документы</div>
<div class="a" style="left:1142px;top:509px;width:162px;height:25px;background:linear-gradient(#dde0e5,#d3d7dd);border:1px solid #b1b6bd"></div>
<div class="t" style="left:1150.48225px;top:512.94px;font-size:13.15px;color:#222;">Показатели</div>
<div class="a" style="left:1304px;top:509px;width:154px;height:25px;background:linear-gradient(#dde0e5,#d3d7dd);border:1px solid #b1b6bd"></div>
<div class="t" style="left:1313.4273px;top:513.19px;font-size:12.45px;color:#222;">Операции</div>
<div class="a" style="left:682px;top:507px;width:155px;height:28px;background:#fff;border:1px solid #b1b6bd;border-bottom:none"></div>
<div class="t" style="left:691.2845px;top:512.61px;font-size:13.25px;color:#222;">Субъекты</div>
<div class="a" style="left:679px;top:532px;width:784px;height:120px;background:#fff;border:2px solid #9ea4ad;border-top:2px solid #a3a9b1"></div>
<div class="a" style="left:683px;top:532px;width:153px;height:2px;background:#fff"></div>
<div class="a" style="left:681px;top:534px;width:780px;height:23px;background:#f2f3f6;border-bottom:1px solid #b8bcc2"></div>
<div class="a" style="left:681px;top:534px;width:18px;height:22px;background:#eef0f3;border-right:1px solid #b8bcc2"></div>
<div class="a" style="left:681px;top:557px;width:18px;height:72px;background:#fff;border-right:1px solid #b8bcc2;border-bottom:1px solid #aab0b8"></div>
<div class="a" style="left:681px;top:605px;width:17px;height:23px;background:#f1f3f5"></div>
<div class="a" style="left:1079px;top:534px;width:1px;height:95px;background:#d6d9de"></div>
<div class="t" style="left:703.0039400000001px;top:538.03px;font-size:12.89px;color:#333;">Субъект</div>
<div class="t" style="left:1084.21342px;top:537.28px;font-size:12.46px;color:#333;">Тип связи</div>
<div class="a" style="left:1065px;top:542px;width:0;height:0;border-left:4.5px solid transparent;border-right:4.5px solid transparent;border-bottom:5px solid #111"></div>
<div class="a" style="left:699px;top:557px;width:380px;height:23px;background:#ebebec"></div>
<div class="a" style="left:699px;top:580px;width:762px;height:1px;background:#e0e3e6"></div>
<div class="a" style="left:699px;top:604px;width:762px;height:1px;background:#e0e3e6"></div>
<div class="a" style="left:699px;top:628px;width:762px;height:1px;background:#e0e3e6"></div>
<div class="a" style="left:681px;top:580px;width:18px;height:1px;background:#c4c8cc"></div>
<div class="a" style="left:681px;top:604px;width:18px;height:1px;background:#b0b4b8"></div>
<svg style="left:685px;top:565px" width="9" height="9"><use href="#star" width="9" height="9"/></svg>
<svg style="left:685px;top:589px" width="9" height="9"><use href="#star" width="9" height="9"/></svg>
<svg style="left:685px;top:613px" width="9" height="9"><use href="#star_g" width="9" height="9"/></svg>
<div class="t" style="left:702.6001px;top:561.92px;font-size:12.94px;color:#000;">Начальник отдела продаж</div>
<div class="t" style="left:1083.89896px;top:561.82px;font-size:12.63px;color:#000;">является владельцем</div>
<div class="t" style="left:703.0250000000001px;top:585.57px;font-size:12.5px;color:#000;">Старший менеджер по продажам</div>
<div class="t" style="left:1083.10438px;top:585.50px;font-size:12.98px;color:#000;">выполняет</div>
</body></html>
